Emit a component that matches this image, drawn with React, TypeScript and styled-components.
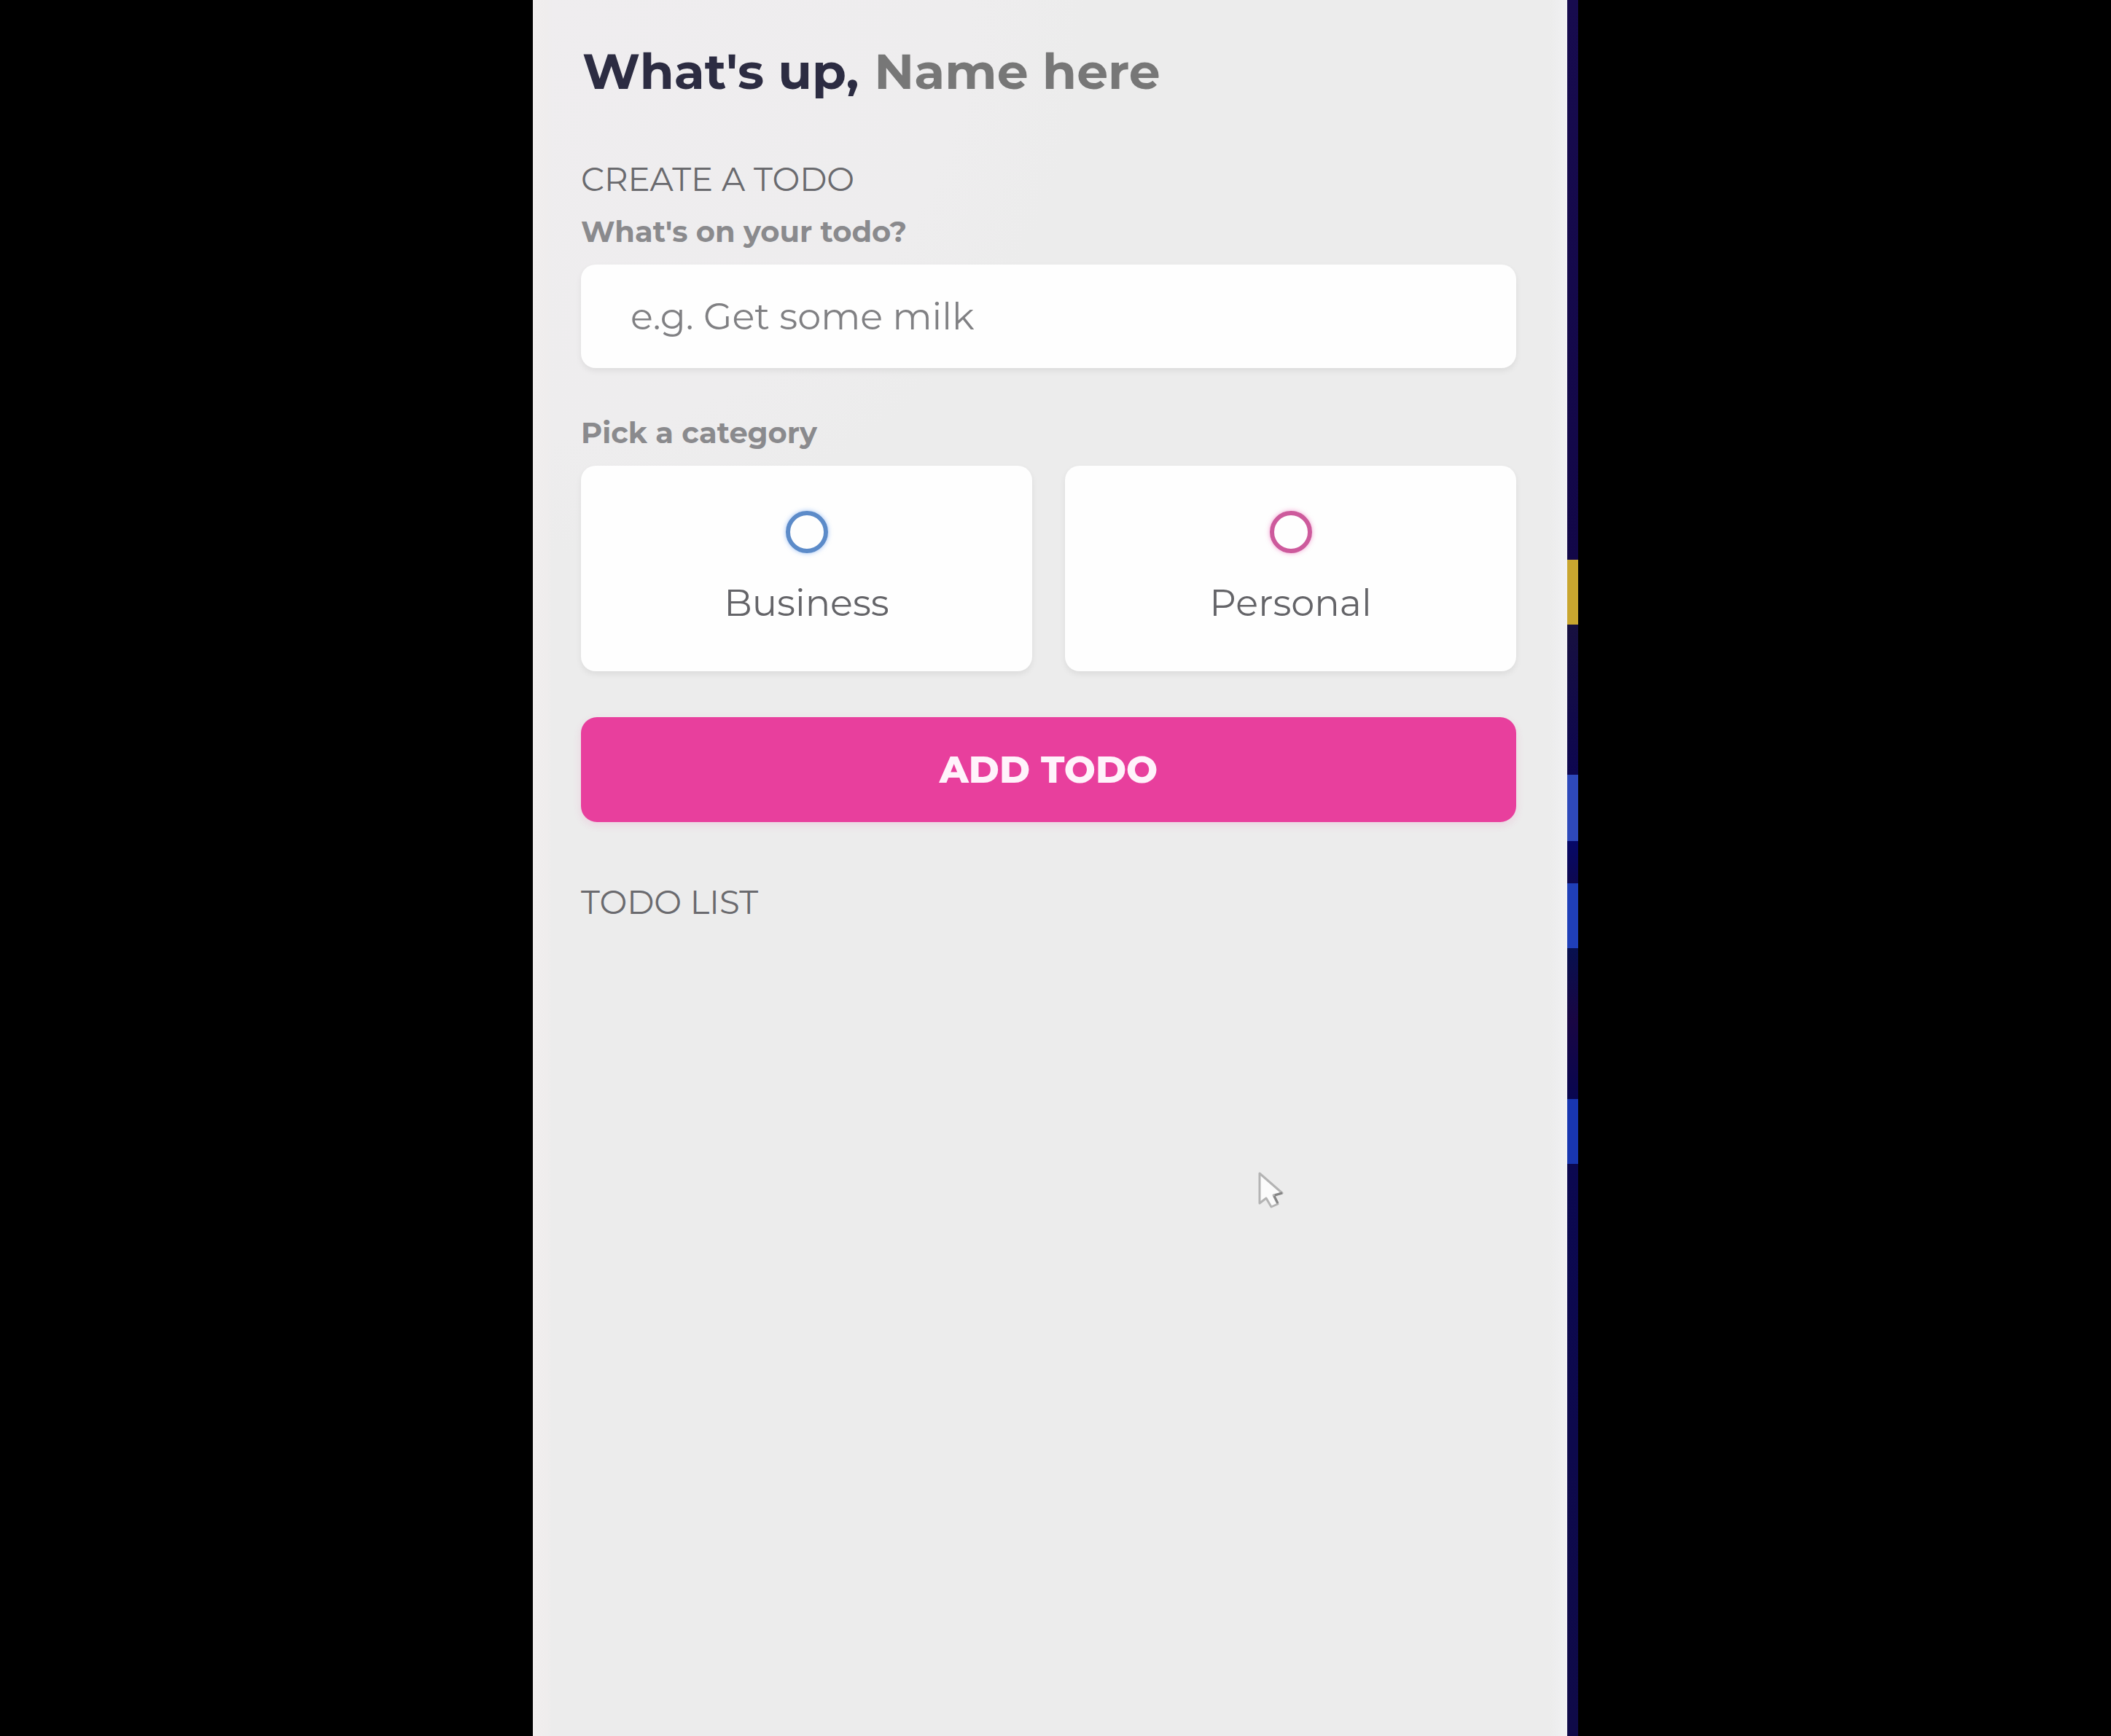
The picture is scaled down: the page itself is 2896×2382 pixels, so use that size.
import React from "react";
import styled, { createGlobalStyle } from "styled-components";

const GlobalStyle = createGlobalStyle`
  *, *::before, *::after { box-sizing: border-box; }
  body {
    margin: 0;
    background: #000;
    color: #313154;
    font-family: Montserrat, Inter, "Open Sans", sans-serif;
  }
  input, button { font-family: inherit; }
`;

const Stage = styled.div`
  position: relative;
  display: flex;
  width: 100%;
  max-width: 1434px;
  min-height: 100vh;
  margin: 0 auto;
`;

const Main = styled.main`
  flex: 1;
  min-width: 0;
  padding: 53px 70px 64px 66px;
  background:
    linear-gradient(90deg, #f1eeee 0, #efeded 20px, transparent 26px),
    linear-gradient(270deg, #f1f1f3 0, transparent 24px),
    radial-gradient(circle at 0 0, #efedef 0, #eeedee 600px, #ececec 760px);
`;

const Wallpaper = styled.div`
  flex: 0 0 15px;
  background: linear-gradient(
    180deg,
    #170b4e 0, #120748 768px,
    #c9a62f 768px, #c9a62f 857px,
    #17103f 857px, #0d0650 1063px,
    #2e49bb 1063px, #2e49bb 1154px,
    #060868 1154px, #0d0850 1212px,
    #1f3fb8 1212px, #1f3fb8 1301px,
    #07104f 1301px, #190643 1400px, #080650 1508px,
    #1836b0 1508px, #1836b0 1597px,
    #0b0850 1597px, #0f0a48 100%
  );
`;

const Greeting = styled.h1`
  display: flex;
  flex-wrap: wrap;
  align-items: baseline;
  gap: 21px;
  margin: 0 0 76px;
  padding-left: 2px;
  font-size: 68px;
  font-weight: 700;
  line-height: 88px;
  color: #2c2c42;
`;

const NameInput = styled.input`
  flex: 1;
  min-width: 0;
  height: 88px;
  padding: 0;
  border: 0;
  outline: 0;
  background: transparent;
  font-size: inherit;
  font-weight: inherit;
  &::placeholder { color: #777; opacity: 1; }
`;

const SectionTitle = styled.h2`
  margin: 0 0 18px;
  font-size: 45px;
  font-weight: 400;
  line-height: 56px;
  text-transform: uppercase;
  color: #6a6a6e;
`;

const Form = styled.form`
  margin-bottom: 82px;
`;

const FieldLabel = styled.label`
  display: block;
  margin-bottom: 19px;
  padding: 0;
  font-size: 40px;
  font-weight: 700;
  line-height: 52px;
  color: #8a8a8d;
`;

const TextField = styled.input`
  display: block;
  width: 100%;
  height: 142px;
  margin-bottom: 63px;
  padding: 0 68px;
  border: 0;
  border-radius: 20px;
  outline: 0;
  background: #fefefe;
  box-shadow: 0 4px 8px rgba(0, 0, 0, 0.07);
  font-size: 51px;
  font-weight: 400;
  color: #313154;
  &::placeholder { color: #808083; opacity: 1; }
`;

const Options = styled.div`
  display: grid;
  grid-template-columns: 1fr 1fr;
  gap: 45px;
  margin-bottom: 63px;
`;

const Option = styled.label`
  display: flex;
  flex-direction: column;
  align-items: center;
  gap: 38px;
  padding: 62px 32px 64px;
  border-radius: 20px;
  background: #fefefe;
  box-shadow: 0 4px 8px rgba(0, 0, 0, 0.07);
  font-size: 51px;
  font-weight: 400;
  line-height: 60px;
  color: #646468;
  cursor: pointer;
`;

const Radio = styled.input<{ $color: string; $glow: string }>`
  appearance: none;
  width: 58px;
  height: 58px;
  margin: 0;
  border: 6px solid ${(p) => p.$color};
  border-radius: 50%;
  box-shadow: 0 0 6px ${(p) => p.$glow};
  &:checked { background: radial-gradient(${(p) => p.$color} 45%, transparent 50%); }
`;

const Submit = styled.button`
  display: block;
  width: 100%;
  height: 144px;
  padding: 0;
  border: 0;
  border-radius: 22px;
  background: #e83f9d;
  box-shadow: 0 4px 12px rgba(232, 63, 157, 0.14);
  font-size: 51px;
  font-weight: 800;
  color: #fff3fb;
  text-transform: uppercase;
  cursor: pointer;
`;

const Pointer = styled.svg`
  position: absolute;
  left: 993px;
  top: 1606px;
  width: 42px;
  height: 54px;
`;

const categories = [
  { value: "business", label: "Business", color: "#5c8bc9", glow: "rgba(58, 130, 238, 0.5)" },
  { value: "personal", label: "Personal", color: "#cd5a9c", glow: "rgba(234, 64, 164, 0.5)" },
];

export default function App() {
  return (
    <>
      <GlobalStyle />
      <Stage>
        <Main>
          <Greeting>
            <label htmlFor="name">What's up,</label>
            <NameInput id="name" type="text" placeholder="Name here" />
          </Greeting>
          <SectionTitle>Create a todo</SectionTitle>
          <Form onSubmit={(e) => e.preventDefault()}>
            <FieldLabel htmlFor="content">What's on your todo?</FieldLabel>
            <TextField id="content" type="text" placeholder="e.g. Get some milk" />
            <FieldLabel as="div" id="category-label">Pick a category</FieldLabel>
            <Options role="radiogroup" aria-labelledby="category-label">
              {categories.map((c) => (
                <Option key={c.value}>
                  <Radio type="radio" name="category" value={c.value} $color={c.color} $glow={c.glow} />
                  <span>{c.label}</span>
                </Option>
              ))}
            </Options>
            <Submit type="submit">Add todo</Submit>
          </Form>
          <SectionTitle>Todo list</SectionTitle>
        </Main>
        <Wallpaper />
        <Pointer viewBox="0 0 42 54" aria-hidden="true">
          <path
            d="M4 4 L4 45 L13 38 L20 50 L29 46 L23 34 L35 31 Z"
            fill="#fbfbfb"
            stroke="#b4b4b4"
            strokeWidth="3"
            strokeLinejoin="round"
          />
          <path d="M24 35 L29 45 M25 34 L35 31" fill="none" stroke="#858585" strokeWidth="3" />
        </Pointer>
      </Stage>
    </>
  );
}
